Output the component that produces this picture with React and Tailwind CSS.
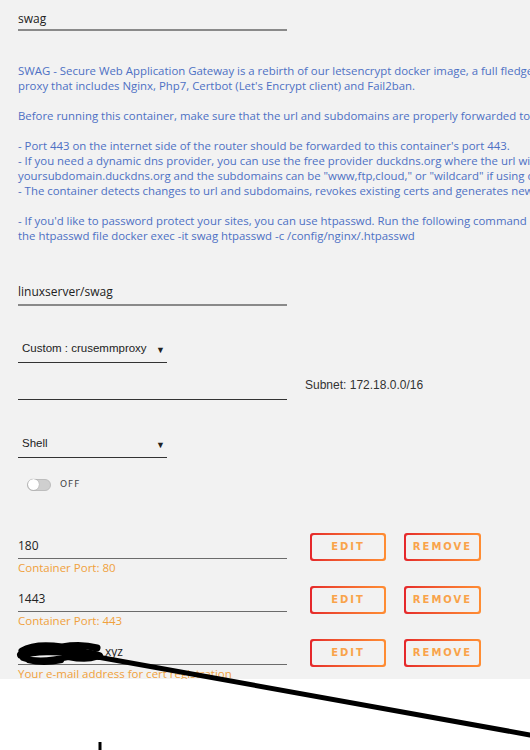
import React from "react";

const descLines = [
  "SWAG - Secure Web Application Gateway is a rebirth of our letsencrypt docker image, a full fledged web server and reverse",
  "proxy that includes Nginx, Php7, Certbot (Let's Encrypt client) and Fail2ban.",
  "",
  "Before running this container, make sure that the url and subdomains are properly forwarded to this container's host.",
  "",
  "- Port 443 on the internet side of the router should be forwarded to this container's port 443.",
  "- If you need a dynamic dns provider, you can use the free provider duckdns.org where the url will be",
  'yoursubdomain.duckdns.org and the subdomains can be "www,ftp,cloud," or "wildcard" if using duckdns.',
  "- The container detects changes to url and subdomains, revokes existing certs and generates new ones.",
  "",
  "- If you'd like to password protect your sites, you can use htpasswd. Run the following command on your host to generate",
  "the htpasswd file docker exec -it swag htpasswd -c /config/nginx/.htpasswd",
];

const sans = "font-['Open_Sans',sans-serif]";

function OutlineButton({ label, width }) {
  return (
    <div
      className={`rounded-[3px] bg-gradient-to-r from-[#e5262b] to-[#ff8d33] p-[2px] ${width}`}
    >
      <div className="flex h-[24px] items-center justify-center rounded-[2px] bg-[#f2f2f2] font-['DejaVu_Sans',sans-serif] text-[10px] font-bold tracking-[2px] text-[#f9a34a]">
        {label}
      </div>
    </div>
  );
}

function PortRow({ value, hint, children }) {
  return (
    <div className="flex h-[53px] items-start">
      <div className="w-[269px]">
        <div className="flex h-[27px] items-end border-b border-[#6b6b6b] pb-[3px] text-[12px] text-[#222]">
          {children ?? value}
        </div>
        <div className="mt-[2px] whitespace-nowrap text-[11.5px] leading-[14px] text-[#f0a13c]">
          {hint}
        </div>
      </div>
      <div className="ml-[23px] mt-[1px] flex gap-[18px]">
        <OutlineButton label="EDIT" width="w-[76px]" />
        <OutlineButton label="REMOVE" width="w-[77px]" />
      </div>
    </div>
  );
}

function Select({ label, width }) {
  return (
    <div
      className={`flex h-[26px] items-end justify-between border-b border-[#333] pb-[5px] pl-[4px] pr-[2px] font-['Liberation_Sans',sans-serif] text-[11.5px] text-[#222] ${width}`}
    >
      <span>{label}</span>
      <span className="text-[9px]">▼</span>
    </div>
  );
}

export default function App() {
  return (
    <div className="relative h-[750px] w-[530px] overflow-hidden bg-white">
      <div className={`h-[679px] overflow-hidden bg-[#f2f2f2] pl-[18px] ${sans}`}>
        <div className="pt-[7px]">
          <div className="flex h-[24px] w-[269px] items-end border-b-2 border-[#8a8a8a] pb-[1px] text-[12px] text-[#222]">
            swag
          </div>
        </div>

        <div className="mt-[32px] text-[11.4px] leading-[15px] text-[#4d70c4]">
          {descLines.map((line, i) => (
            <div key={i} className="h-[15px] whitespace-pre">
              {line}
            </div>
          ))}
        </div>

        <div className="mt-[39px] flex h-[24px] w-[269px] items-end border-b-2 border-[#8a8a8a] pb-[3px] text-[12px] text-[#222]">
          linuxserver/swag
        </div>

        <div className="mt-[31px]">
          <Select label="Custom : crusemmproxy" width="w-[149px]" />
        </div>

        <div className="mt-[11px] flex items-end">
          <div className="h-[26px] w-[269px] border-b border-[#333]" />
          <div className="mb-[6px] ml-[18px] font-['Liberation_Sans',sans-serif] text-[12px] text-[#333]">
            Subnet: 172.18.0.0/16
          </div>
        </div>

        <div className="mt-[32px]">
          <Select label="Shell" width="w-[149px]" />
        </div>

        <div className="mt-[20px] flex items-center pl-[9px]">
          <div className="flex h-[12px] w-[24px] items-center rounded-full border border-[#bdbdbd] bg-[#cfcfcf]">
            <div className="h-[11px] w-[11px] rounded-full bg-white shadow-[0_0_1px_rgba(0,0,0,0.4)]" />
          </div>
          <span className="ml-[9px] font-['DejaVu_Sans',sans-serif] text-[9px] tracking-[1px] text-[#444]">
            OFF
          </span>
        </div>

        <div className="mt-[40px]">
          <PortRow value="180" hint="Container Port: 80" />
          <PortRow value="1443" hint="Container Port: 443" />
          <PortRow hint="Your e-mail address for cert registration">
            <span className="pl-[87px]">xyz</span>
          </PortRow>
        </div>
      </div>

      {/* hand-drawn marker strokes on top of the form */}
      <svg
        className="pointer-events-none absolute left-0 top-0"
        width="530"
        height="750"
        viewBox="0 0 530 750"
      >
        <g stroke="#000" strokeLinecap="round" strokeLinejoin="round" fill="none">
          <path d="M22 651 C32 645 48 645 62 647 C74 645 86 645 97 648" strokeWidth="7" />
          <path d="M21 655 C36 650 56 651 76 652 C86 653 93 654 99 656" strokeWidth="8" />
          <path d="M23 658 C38 663 55 660 68 657 C78 659 88 660 96 657" strokeWidth="6" />
          <path d="M28 661 C40 664 52 663 62 661" strokeWidth="4" />
          <path d="M92 656 L530 735" strokeWidth="5" />
          <path d="M100 742 L100 750" strokeWidth="3" strokeLinecap="butt" />
        </g>
      </svg>
    </div>
  );
}
